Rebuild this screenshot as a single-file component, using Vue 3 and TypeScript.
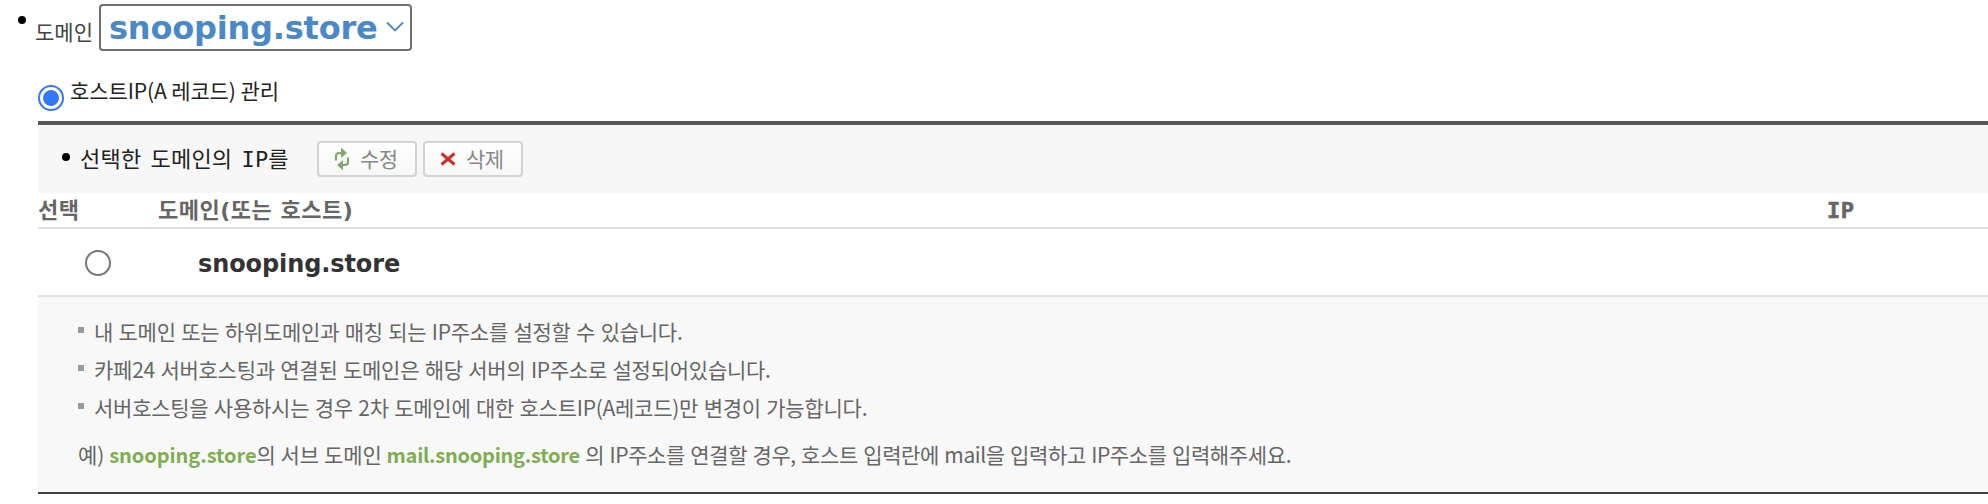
<template>
  <div class="page">
    <div class="domain-row">
      <span class="dot"></span>
      <span class="domain-label">도메인</span>
      <button class="domain-select" type="button">
        <span class="domain-name">{{ domain }}</span>
        <svg class="chevron" viewBox="0 0 18 12" fill="none" stroke="currentColor" stroke-width="1.8">
          <path d="M1 1.5l8 8 8-8" />
        </svg>
      </button>
    </div>

    <label class="manage-row">
      <span class="radio" :class="{ checked: mode === 'host' }" @click="mode = 'host'"></span>
      <span class="manage-label">호스트IP(A 레코드) 관리</span>
    </label>

    <div class="panel">
      <div class="toolbar">
        <span class="dot"></span>
        <span class="toolbar-label">선택한 도메인의 <span class="ip">IP</span>를</span>
        <button class="tool-btn" type="button">
          <svg class="icon-edit" viewBox="0 0 16 24" fill="none" stroke="#80a970" stroke-width="2.2">
            <path d="M2 13.5V9.500Q2 6 5 6H8M14 10.500v4Q14 18 11 18H8" />
            <path d="M7 0.500l6 5.500-6 5zM9 13l-6 5 6 5.500z" fill="#80a970" stroke="none" />
          </svg>
          <span>수정</span>
        </button>
        <button class="tool-btn" type="button">
          <svg class="icon-delete" viewBox="0 0 16 14" fill="none" stroke="#cb3328" stroke-width="3">
            <path d="M1.500 1.500l13 11M14.500 1.500l-13 11" />
          </svg>
          <span>삭제</span>
        </button>
      </div>

      <div class="table-head">
        <span class="col-select">선택</span>
        <span class="col-domain">도메인(또는 호스트)</span>
        <span class="col-ip">IP</span>
      </div>
      <div v-for="host in hosts" :key="host" class="table-row">
        <span class="col-select">
          <span class="radio" :class="{ checked: selected === host }" @click="selected = host"></span>
        </span>
        <span class="host-name">{{ host }}</span>
      </div>

      <div class="notes">
        <ul>
          <li v-for="(note, i) in notes" :key="i">
            <span class="note-text">{{ note }}</span>
          </li>
        </ul>
        <p class="example">
          예) <b>{{ domain }}</b>의 서브 도메인 <b class="sub-domain">mail.{{ domain }}</b><span class="example-tail"> 의 IP주소를 연결할 경우, 호스트 입력란에 mail을 입력하고 IP주소를 입력해주세요.</span>
        </p>
      </div>
    </div>
  </div>
</template>

<script setup lang="ts">
import { ref } from 'vue'

const domain = ref<string>('snooping.store')
const mode = ref<'host' | ''>('host')
const selected = ref<string>('')
const hosts = ref<string[]>(['snooping.store'])

const notes: string[] = [
  '내 도메인 또는 하위도메인과 매칭 되는 IP주소를 설정할 수 있습니다.',
  '카페24 서버호스팅과 연결된 도메인은 해당 서버의 IP주소로 설정되어있습니다.',
  '서버호스팅을 사용하시는 경우 2차 도메인에 대한 호스트IP(A레코드)만 변경이 가능합니다.'
]
</script>

<style>
body {
  background: #fff;
}
</style>

<style scoped>
.page {
  height: 504px;
  overflow: hidden;
  box-sizing: border-box;
  padding-top: 4px;
  background: #fff;
  color: #666;
  font-family: 'Noto Sans CJK KR', sans-serif;
  font-size: 21px;
  white-space: nowrap;
}

button {
  font: inherit;
  cursor: pointer;
}

.dot {
  flex: none;
  width: 8px;
  height: 8px;
  border-radius: 50%;
  background: #000;
}

.domain-row {
  display: flex;
  height: 47px;
  padding-left: 18px;
}

.domain-row .dot {
  margin-top: 12px;
}

.domain-label {
  width: 64px;
  margin-left: 9px;
  padding-top: 12px;
  line-height: 31px;
  color: #444;
}

.domain-select {
  display: flex;
  align-items: center;
  box-sizing: border-box;
  width: 313px;
  height: 47px;
  padding: 1px 0 0 8px;
  border: 2px solid #707070;
  border-radius: 4px;
  background: #fff;
  color: #4a89c8;
}

.domain-name {
  width: 269px;
  font-family: 'DejaVu Sans', sans-serif;
  font-size: 32px;
  font-weight: bold;
  line-height: 40px;
  letter-spacing: -0.2px;
  text-align: left;
}

.chevron {
  width: 18px;
  height: 12px;
  margin: 0 0 2px 8px;
}

.manage-row {
  display: flex;
  height: 70px;
  padding-left: 38px;
  color: #222;
}

.radio {
  display: block;
  flex: none;
  box-sizing: border-box;
  width: 26px;
  height: 26px;
  border: 2px solid #767676;
  border-radius: 50%;
  background: #fff;
}

.radio.checked {
  border-color: #3478f6;
  background: radial-gradient(circle, #3478f6 7.5px, #fff 8.3px);
}

.manage-row .radio {
  margin-top: 34px;
}

.manage-label {
  margin: 24px 0 0 6px;
  line-height: 31px;
  letter-spacing: -0.1px;
}

.panel {
  margin-left: 38px;
  border-top: 4px solid #595757;
}

.toolbar {
  display: flex;
  height: 68px;
  padding-left: 24px;
  background: #f7f7f7;
}

.toolbar .dot {
  margin-top: 28px;
}

.toolbar-label {
  flex: none;
  width: 237px;
  margin: 18px 0 0 10px;
  font-family: 'DejaVu Sans', 'Noto Sans CJK KR', sans-serif;
  font-size: 22px;
  line-height: 34px;
  letter-spacing: 0.2px;
  word-spacing: 2px;
  color: #222;
}

.ip {
  font-family: 'DejaVu Sans Mono', monospace;
}

.tool-btn {
  display: flex;
  flex: none;
  align-items: center;
  box-sizing: border-box;
  width: 100px;
  height: 36px;
  margin: 16px 6px 0 0;
  padding: 0 0 0 15px;
  border: 2px solid #d3d3d3;
  border-radius: 4px;
  background: linear-gradient(#fff, #f7f7f7);
  color: #888;
  letter-spacing: -0.5px;
}

.tool-btn span {
  line-height: 28px;
  margin-bottom: 2px;
}

.icon-edit {
  width: 16px;
  height: 24px;
  margin-right: 10px;
}

.icon-delete {
  width: 16px;
  height: 14px;
  margin-right: 10px;
}

.table-head {
  display: flex;
  height: 34px;
  border-bottom: 2px solid #e0e0e0;
  font-family: 'DejaVu Sans', 'Noto Sans CJK KR', sans-serif;
  font-size: 22px;
  font-weight: bold;
  line-height: 36px;
  letter-spacing: 0.5px;
}

.col-select {
  width: 120px;
}

.col-domain {
  width: 1669px;
}

.col-ip {
  font-family: 'DejaVu Sans Mono', monospace;
  -webkit-text-stroke: 0.6px currentColor;
}

.table-row {
  display: flex;
  align-items: center;
  height: 66px;
  border-bottom: 2px solid #e0e0e0;
}

.table-row .radio {
  margin: 2px 0 0 47px;
}

.host-name {
  padding: 3px 0 0 40px;
  font-family: 'DejaVu Sans', sans-serif;
  font-size: 24px;
  font-weight: bold;
  letter-spacing: -0.1px;
  color: #333;
}

.notes {
  box-sizing: border-box;
  height: 197px;
  padding: 15px 0 0 40px;
  border-bottom: 2px solid #404040;
  background: #f8f8f8;
}

.notes ul {
  margin: 0;
  padding: 0;
  list-style: none;
}

.notes li {
  display: flex;
  height: 38px;
  line-height: 38px;
  letter-spacing: -0.25px;
  word-spacing: 1px;
}

.notes li::before {
  content: '';
  width: 6px;
  height: 6px;
  margin: 15px 10px 0 0;
  background: #999;
}

.example {
  margin: 9px 0 0;
  line-height: 38px;
}

.example b {
  color: #7fae52;
  font-size: 20px;
  letter-spacing: -0.05px;
}

.example .sub-domain {
  letter-spacing: -0.25px;
}

.example-tail {
  letter-spacing: -0.38px;
  word-spacing: 1px;
}
</style>
